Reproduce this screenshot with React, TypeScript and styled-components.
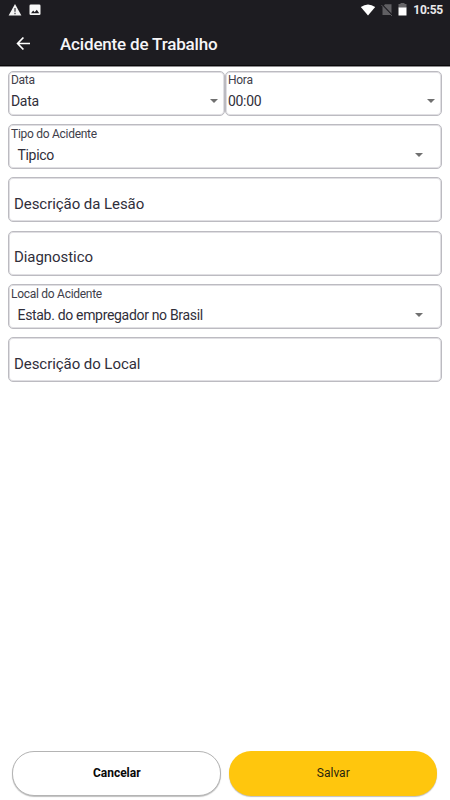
import React from 'react';
import styled, { createGlobalStyle } from 'styled-components';

const GlobalStyle = createGlobalStyle`
  * { box-sizing: border-box; }
  body { margin: 0; background: #fff; font-family: Roboto, sans-serif; }
  button { font-family: inherit; cursor: pointer; }
`;

const Screen = styled.div`
  display: flex;
  flex-direction: column;
  width: 100%;
  height: 100vh;
  min-height: 800px;
  overflow: hidden;
  background: #fff;
`;

const Header = styled.header`
  height: 66px;
  background: #1d1c21;
  border-bottom: 1px solid #09080a;
  box-shadow: 0 1px 0 #8d8b8e;
`;

const StatusBar = styled.div`
  display: flex;
  align-items: center;
  justify-content: space-between;
  height: 20px;
  padding: 0 7px 0 8px;
`;

const StatusGroup = styled.div<{ $gap: number }>`
  display: flex;
  align-items: center;
  gap: ${(p) => p.$gap}px;
`;

const Clock = styled.span`
  margin-left: 1px;
  color: #e9e8ea;
  font-size: 12px;
  letter-spacing: -0.25px;
  font-weight: 700;
  line-height: 20px;
`;

const AppBar = styled.div`
  display: flex;
  align-items: center;
  height: 46px;
  padding: 0 15px 0 14px;
`;

const BackButton = styled.button`
  display: flex;
  padding: 0;
  border: 0;
  background: none;
`;

const Title = styled.h1`
  margin: 1px 0 0 27px;
  color: #f6f5f7;
  font-size: 17px;
  letter-spacing: -0.17px;
  font-weight: 500;
  line-height: 24px;
`;

const Form = styled.form`
  display: flex;
  flex-direction: column;
  flex: 1;
  gap: 8.33px;
  padding: 4.7px 8px 0;
`;

const FieldRow = styled.div`
  display: flex;
`;

const Field = styled.div`
  display: flex;
  flex: 0 0 45px;
  flex-direction: column;
  height: 45px;
  border: 1px solid #bcbbc1;
  border-radius: 5px;
  box-shadow: inset 0 0 0 1px #e0dfe3;
  color: #302e3a;

  ${FieldRow} & {
    flex: 1;
  }
`;

const Label = styled.span`
  padding: 0.5px 2px 0;
  font-size: 12px;
  letter-spacing: -0.28px;
  line-height: 16px;
  color: #403e4a;
`;

const Value = styled.div<{ $indent: number; $end: number }>`
  display: flex;
  align-items: center;
  justify-content: space-between;
  height: 26px;
  padding: 0 ${(p) => p.$end}px 0 ${(p) => p.$indent}px;
  font-size: 14px;
  letter-spacing: -0.32px;
  line-height: 26px;
`;

const Placeholder = styled.span`
  padding: 13.3px 5px 0;
  font-size: 15px;
  letter-spacing: -0.06px;
  line-height: 24px;
`;

const Caret = styled.span`
  width: 0;
  height: 0;
  border: 4.5px solid transparent;
  border-top-color: #707070;
  border-bottom: 0;
`;

const Actions = styled.footer`
  display: flex;
  gap: 8px;
  padding: 0 13px 4px 12px;
`;

const ActionButton = styled.button<{ $primary?: boolean }>`
  flex: 1 1 50%;
  height: 45px;
  padding: 0 0 1px 1px;
  border: ${(p) => (p.$primary ? '0' : '1px solid #b4b4b4')};
  border-radius: 22px;
  background: ${(p) => (p.$primary ? '#ffc60d' : '#fff')};
  box-shadow: 0 1px 1px rgba(0, 0, 0, 0.25);
  color: ${(p) => (p.$primary ? '#29240f' : '#080808')};
  font-size: 12px;
  font-weight: ${(p) => (p.$primary ? 400 : 700)};
`;

const SelectField = ({ label, value, compact }: { label: string; value: string; compact?: boolean }) => (
  <Field>
    <Label>{label}</Label>
    <Value $indent={compact ? 2 : 8.5} $end={compact ? 6 : 18}>
      {value}
      <Caret />
    </Value>
  </Field>
);

const TextField = ({ label }: { label: string }) => (
  <Field>
    <Placeholder>{label}</Placeholder>
  </Field>
);

const WarningIcon = () => (
  <svg width="14" height="14" viewBox="0 0 14 14">
    <path d="M7 1 13.4 12.6H.6Z" fill="#f3f3f3" />
    <path d="M7 5v3.8M7 9.8v1.5" stroke="#55545a" strokeWidth="1.4" />
  </svg>
);

const ImageIcon = () => (
  <svg width="12" height="12" viewBox="0 0 12 12">
    <rect x="0.5" y="0.5" width="11" height="10.5" rx="1.3" fill="#f8f8f8" />
    <path d="M2 9.3 4.2 6.6 5.7 8.3 7.8 5.7 10.2 9.3Z" fill="#1d1c21" />
  </svg>
);

const WifiIcon = () => (
  <svg width="16" height="14" viewBox="0 0 16 14">
    <path d="M.8 4Q8-1 15.2 4L8 12.6Z" fill="#fff" />
  </svg>
);

const NoSimIcon = () => (
  <svg width="12" height="14" viewBox="0 0 12 14">
    <path d="M4 1.2H10.5V12H1.5V4Z" fill="#605f63" />
    <path d="M1 1.5 11.5 12.5" stroke="#1d1c21" strokeWidth="1.3" />
    <path d="M.4 2 11 13" stroke="#605f63" strokeWidth="0.9" />
  </svg>
);

const BatteryIcon = () => (
  <svg width="9" height="14" viewBox="0 0 9 14">
    <path d="M2.5 0h4v1H8.5V5H.5V1h2Z" fill="#666568" />
    <path d="M.5 4.5h8v8H.5Z" fill="#fff" />
  </svg>
);

const ArrowIcon = () => (
  <svg width="19" height="19" viewBox="0 0 19 19" fill="none" stroke="#fff" strokeWidth="1.7">
    <path d="M16 9.5H3.8M9.4 3.5 3.6 9.5 9.4 15.5" />
  </svg>
);

export default function App() {
  return (
    <Screen>
      <GlobalStyle />
      <Header>
        <StatusBar>
          <StatusGroup $gap={7}>
            <WarningIcon />
            <ImageIcon />
          </StatusGroup>
          <StatusGroup $gap={5}>
            <WifiIcon />
            <NoSimIcon />
            <BatteryIcon />
            <Clock>10:55</Clock>
          </StatusGroup>
        </StatusBar>
        <AppBar>
          <BackButton aria-label="Voltar">
            <ArrowIcon />
          </BackButton>
          <Title>Acidente de Trabalho</Title>
        </AppBar>
      </Header>
      <Form>
        <FieldRow>
          <SelectField label="Data" value="Data" compact />
          <SelectField label="Hora" value="00:00" compact />
        </FieldRow>
        <SelectField label="Tipo do Acidente" value="Tipico" />
        <TextField label="Descrição da Lesão" />
        <TextField label="Diagnostico" />
        <SelectField label="Local do Acidente" value="Estab. do empregador no Brasil" />
        <TextField label="Descrição do Local" />
      </Form>
      <Actions>
        <ActionButton type="button">Cancelar</ActionButton>
        <ActionButton type="button" $primary>
          Salvar
        </ActionButton>
      </Actions>
    </Screen>
  );
}
